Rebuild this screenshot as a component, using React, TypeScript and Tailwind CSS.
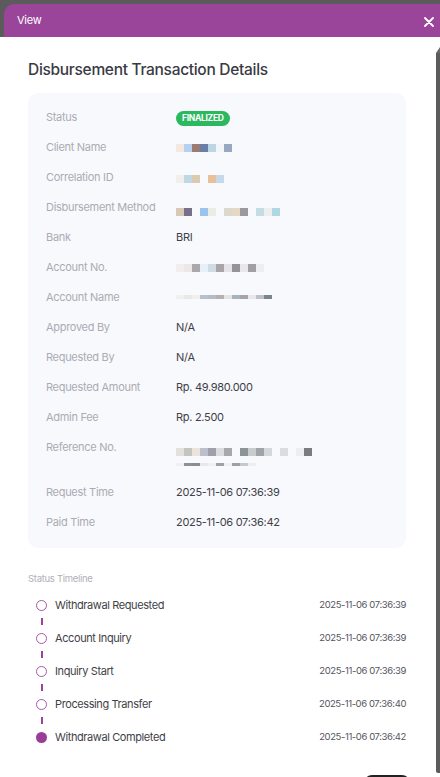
import React from "react";

const BG = "#f8f9fd";

type Row = {
  label: string;
  value?: string;
  badge?: string;
  pix?: string[][];
  pixH?: number[];
  pt?: number;
  h?: number;
};

const rows: Row[] = [
  { label: "Status", badge: "FINALIZED" },
  {
    label: "Client Name",
    pix: [["#f3e9e1", "#b5d0f0", "#9a7c74", "#6a7ea6", "#bcd6e6", "#f2f5fa", "#98a8c0"]],
    pixH: [8],
    pt: 6,
  },
  {
    label: "Correlation ID",
    pix: [["#f2eeea", "#c0d8e4", "#dccab0", BG, "#e8c09a", "#c5d9ea"]],
    pixH: [8],
    pt: 7,
  },
  {
    label: "Disbursement Method",
    pix: [["#d8c8b6", "#77708a", BG, "#9cc3ec", "#e8eee4", BG, "#dcd8cc", "#e6d8c4", "#9c98a0", BG, "#c4dce4", "#ecefee", "#b0d8e4"]],
    pixH: [8],
    pt: 10,
  },
  { label: "Bank", value: "BRI" },
  {
    label: "Account No.",
    pix: [["#f3eeee", "#ece8e8", "#aba8ab", "#e6f0f8", "#cfdce6", "#a8a4a8", "#e4e4e8", "#959399", "#e8e8ec", "#a19fa4", "#eceef2"]],
    pixH: [8],
    pt: 6,
  },
  {
    label: "Account Name",
    pix: [["#f0f0f0", "#e8e8e8", "#f0f0ea", "#b8c0cc", "#b4bcc8", "#b8b0b0", "#e4e4e4", "#a8b4bc", "#a8a4a4", "#e8e8ec", "#c0c0c8", "#7c848c"]],
    pixH: [4],
    pt: 7,
  },
  { label: "Approved By", value: "N/A" },
  { label: "Requested By", value: "N/A" },
  { label: "Requested Amount", value: "Rp. 49.980.000" },
  { label: "Admin Fee", value: "Rp. 2.500" },
  {
    label: "Reference No.",
    pix: [
      ["#e4e0dc", "#c4c4c0", "#ece4dc", "#bcc0cc", "#a0a0ac", "#dcdce0", "#a8a8ac", BG, "#8c9498", "#c8cccc", "#a0a4a8", "#d4d8dc", BG, "#dcdce0", BG, "#eeeef0", "#7c7c80"],
      ["#f0f0f0", "#909094", "#8c8c90", "#e8e8ec", "#f0f0f4", "#a0a0a8", "#f0f0f4", "#a0a0a4", "#c8c8cc", "#eeeef2"],
    ],
    pixH: [8, 3],
    pt: 10,
    h: 45,
  },
  { label: "Request Time", value: "2025-11-06 07:36:39" },
  { label: "Paid Time", value: "2025-11-06 07:36:42" },
];

const timeline = [
  { name: "Withdrawal Requested", time: "2025-11-06 07:36:39" },
  { name: "Account Inquiry", time: "2025-11-06 07:36:39" },
  { name: "Inquiry Start", time: "2025-11-06 07:36:39" },
  { name: "Processing Transfer", time: "2025-11-06 07:36:40" },
  { name: "Withdrawal Completed", time: "2025-11-06 07:36:42", done: true },
];

function Pixels({ lines, heights, pt }: { lines: string[][]; heights: number[]; pt: number }) {
  return (
    <div className="flex flex-col gap-[7px]" style={{ paddingTop: pt }}>
      {lines.map((line, i) => (
        <div key={i} className="flex">
          {line.map((c, j) => (
            <div key={j} className="w-[8px]" style={{ background: c, height: heights[i] }} />
          ))}
        </div>
      ))}
    </div>
  );
}

export default function App() {
  return (
    <div
      className="w-[440px] h-[777px] overflow-hidden bg-[#5b5b5b] flex flex-col"
      style={{ fontFamily: "Inter, 'Noto Sans', sans-serif" }}
    >
      <div className="h-[4px] shrink-0" />
      <div className="h-[33px] shrink-0 ml-[4px] bg-[#9a4599] rounded-tl-[10px] flex items-center justify-between pl-[13px] pr-[6px]">
        <span className="text-white text-[11px] tracking-tight">View</span>
        <svg width="10" height="10" viewBox="0 0 10 10" className="mt-[2px]">
          <path d="M1 1 L9 9 M9 1 L1 9" stroke="#fff" strokeWidth="1.8" strokeLinecap="round" />
        </svg>
      </div>
      <div className="flex-1 bg-white flex">
        <div className="flex-1 pl-[28px] pr-[30px] pt-[23px]">
          <h1 className="text-[15.5px] font-medium text-[#3a3a44] tracking-[-0.3px] leading-[20px]">
            Disbursement Transaction Details
          </h1>
          <div className="mt-[13px] rounded-[10px] bg-[#f8f9fd] pl-[18px] pr-[18px] pt-[15px] pb-[5px] flex flex-col">
            {rows.map((r) => (
              <div
                key={r.label}
                className="flex text-[11px] tracking-[-0.3px] leading-[18px]"
                style={{ minHeight: r.h ?? 30 }}
              >
                <div className="w-[130px] shrink-0 text-[#ababb3]">{r.label}</div>
                <div className="text-[#3f3f48]">
                  {r.badge && (
                    <span className="inline-flex items-center h-[15px] mt-[1px] px-[6px] rounded-full bg-[#2cb85f] text-white text-[8.5px] font-bold tracking-[-0.3px]">
                      {r.badge}
                    </span>
                  )}
                  {r.value}
                  {r.pix && <Pixels lines={r.pix} heights={r.pixH!} pt={r.pt ?? 6} />}
                </div>
              </div>
            ))}
          </div>
          <div className="mt-[24px] text-[9.5px] text-[#b0b0b8] tracking-[-0.3px]">Status Timeline</div>
          <div className="mt-[10px] pl-[8px] flex flex-col">
            {timeline.map((t, i) => (
              <div key={t.name} className="flex flex-col">
                <div className="flex items-center h-[18px]">
                  {t.done ? (
                    <div className="w-[11px] h-[11px] rounded-full bg-[#993d99]" />
                  ) : (
                    <div className="w-[11px] h-[11px] rounded-full border-[1.5px] border-[#a45aa6]" />
                  )}
                  <span className="ml-[8px] text-[11px] text-[#3f3f48] tracking-[-0.4px]">{t.name}</span>
                  <span className="ml-auto text-[9.5px] text-[#55555e] tracking-[-0.4px]">{t.time}</span>
                </div>
                {i < timeline.length - 1 && (
                  <div className="h-[15px] flex items-center pl-[5px]">
                    <div className="w-[2px] h-[7px] bg-[#9a4599]" />
                  </div>
                )}
              </div>
            ))}
          </div>
          <div className="mt-[29px] flex justify-end -mr-[4px]">
            <div className="w-[46px] h-[30px] rounded-[8px] bg-[#222]" />
          </div>
        </div>
        <div className="w-[4px] shrink-0 flex flex-col pt-[10px] pb-[32px]">
          <div className="h-[6px] w-[4px] border-b-[6px] border-b-[#6a6a6a] border-l-[4px] border-l-transparent" />
          <div className="flex-1 bg-[#5c5c5c] rounded-bl-[2px]" />
        </div>
      </div>
    </div>
  );
}
